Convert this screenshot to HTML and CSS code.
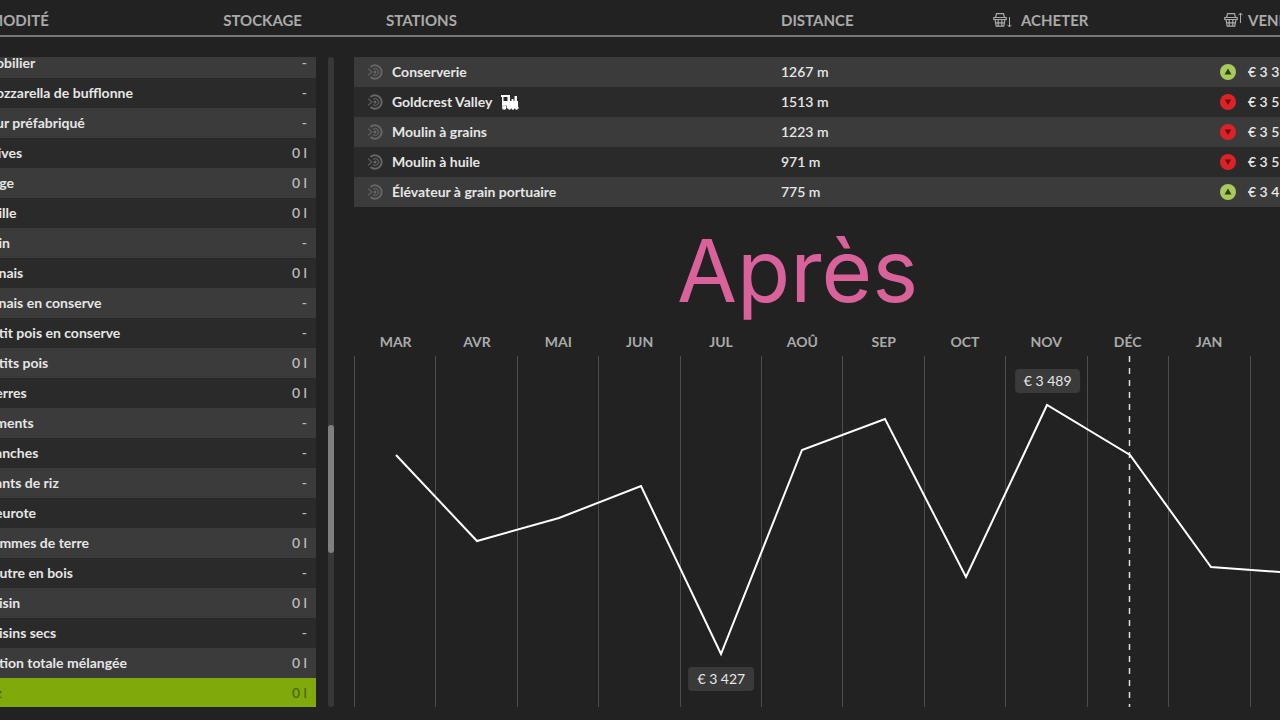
FILE: index.html
```html
<!DOCTYPE html>
<html lang="fr">
<head>
<meta charset="utf-8">
<title>Prix</title>
<link rel="stylesheet" href="styles.css">
</head>
<body>
<svg class="defs" aria-hidden="true">
  <symbol id="target" viewBox="0 0 16 16"><path d="M3.500 3a6.700 6.700 0 1 1 0 10" fill="none" stroke="currentColor" stroke-width="2"/><path d="M1 4.500 4.800 8 1 11.500M6 5.500a3.300 3.300 0 1 1 0 5" fill="none" stroke="currentColor" stroke-width="1.500" opacity=".75"/><circle cx="8" cy="8" r="1.500" fill="currentColor"/></symbol>
  <symbol id="basket" viewBox="0 0 14 16"><path d="M.8 5.500h12.400v2H.8zM2 7.500l1.200 6.700h7.600L12 7.500M2.500 5.500l1-3.800h7l1 3.800M5.200 7.500v6.700M8.800 7.500v6.700M2.500 10.800h9" fill="none" stroke="currentColor" stroke-width="1.200"/></symbol>
  <symbol id="up" viewBox="0 0 16 16"><circle cx="8" cy="8" r="8" fill="#a9c95c"/><path d="M8 4.500 11.500 10.500h-7z" fill="#24440a"/></symbol>
  <symbol id="down" viewBox="0 0 16 16"><circle cx="8" cy="8" r="8" fill="#dc2227"/><path d="M8 11 4.800 5.500h6.400z" fill="#6d0b0d"/></symbol>
</svg>
<div class="page">
  <section class="goods">
    <table>
      <thead><tr><th>COMMODITÉ</th><th class="amount">STOCKAGE</th></tr></thead>
      <tbody>
        <tr class="partial"><td>Mobilier</td><td>-</td></tr>
        <tr><td>Mozzarella de bufflonne</td><td>-</td></tr>
        <tr><td>Mur préfabriqué</td><td>-</td></tr>
        <tr><td>Olives</td><td>0 l</td></tr>
        <tr><td>Orge</td><td>0 l</td></tr>
        <tr><td>Paille</td><td>0 l</td></tr>
        <tr><td>Pain</td><td>-</td></tr>
        <tr><td>Panais</td><td>0 l</td></tr>
        <tr><td>Panais en conserve</td><td>-</td></tr>
        <tr><td>Petit pois en conserve</td><td>-</td></tr>
        <tr><td>Petits pois</td><td>0 l</td></tr>
        <tr><td>Pierres</td><td>0 l</td></tr>
        <tr><td>Piments</td><td>-</td></tr>
        <tr><td>Planches</td><td>-</td></tr>
        <tr><td>Plants de riz</td><td>-</td></tr>
        <tr><td>Pleurote</td><td>-</td></tr>
        <tr><td>Pommes de terre</td><td>0 l</td></tr>
        <tr><td>Poutre en bois</td><td>-</td></tr>
        <tr><td>Raisin</td><td>0 l</td></tr>
        <tr><td>Raisins secs</td><td>-</td></tr>
        <tr><td>Ration totale mélangée</td><td>0 l</td></tr>
        <tr class="selected"><td>Riz</td><td>0 l</td></tr>
      </tbody>
    </table>
  </section>
  <div class="track"><div class="thumb"></div></div>
  <main class="details">
    <table class="stations">
      <thead><tr>
        <th>STATIONS</th><th class="distance">DISTANCE</th>
        <th class="buy"><span class="label"><svg class="trade" viewBox="0 0 19 16"><use href="#basket" width="14" height="16"/><path d="M16.500 5v10M14.500 12.800l2 2.200 2-2.200" fill="none" stroke="currentColor"/></svg>ACHETER</span></th>
        <th class="sell"><span class="label"><svg class="trade" viewBox="0 0 19 16"><use href="#basket" width="14" height="16"/><path d="M16.500 11V1M14.500 3.200l2-2.200 2 2.200" fill="none" stroke="currentColor"/></svg>VENDRE</span></th>
      </tr></thead>
      <tbody>
        <tr><td><span class="label"><svg class="target"><use href="#target"/></svg>Conserverie</span></td><td>1267 m</td><td></td><td><span class="label"><svg class="trend"><use href="#up"/></svg>€ 3 3</span></td></tr>
        <tr><td><span class="label"><svg class="target"><use href="#target"/></svg>Goldcrest Valley<svg class="train" viewBox="0 0 18 15"><path fill="#fff" fill-rule="evenodd" d="M0 0h9v6h1.500V4h2v2h1V1h2.500v5H17v5l1 2.500H6.200L5.500 10.500h-4L1 12V2H0zM2.500 2v4h4V2z"/><g fill="#fff"><circle cx="3.200" cy="12.500" r="2.200"/><circle cx="8.500" cy="13.500" r="1.300"/><circle cx="12" cy="13.500" r="1.300"/><circle cx="15.500" cy="13.500" r="1.300"/></g></svg></span></td><td>1513 m</td><td></td><td><span class="label"><svg class="trend"><use href="#down"/></svg>€ 3 5</span></td></tr>
        <tr><td><span class="label"><svg class="target"><use href="#target"/></svg>Moulin à grains</span></td><td>1223 m</td><td></td><td><span class="label"><svg class="trend"><use href="#down"/></svg>€ 3 5</span></td></tr>
        <tr><td><span class="label"><svg class="target"><use href="#target"/></svg>Moulin à huile</span></td><td>971 m</td><td></td><td><span class="label"><svg class="trend"><use href="#down"/></svg>€ 3 5</span></td></tr>
        <tr><td><span class="label"><svg class="target"><use href="#target"/></svg>Élévateur à grain portuaire</span></td><td>775 m</td><td></td><td><span class="label"><svg class="trend"><use href="#up"/></svg>€ 3 4</span></td></tr>
      </tbody>
    </table>
    <h1>Après</h1>
    <div class="months"><span>MAR</span><span>AVR</span><span>MAI</span><span>JUN</span><span>JUL</span><span>AOÛ</span><span>SEP</span><span>OCT</span><span>NOV</span><span>DÉC</span><span>JAN</span></div>
    <div class="chart">
      <div class="columns"><i></i><i></i><i></i><i></i><i></i><i></i><i></i><i></i><i></i><i></i><i></i><i></i></div>
      <svg class="plot" viewBox="0 0 977 351" preserveAspectRatio="none" role="img" aria-label="Évolution du prix">
        <path d="M775.500 0V351" stroke="#ddd" stroke-width="1.500" stroke-dasharray="6 6"/>
        <polyline points="42,99 123,185 205,162 287,130 367,298 448,94 531,63 612,221 693,49 776,99 857,211 938,217" fill="none" stroke="#fff" stroke-width="2"/>
      </svg>
      <span class="price" style="left:71%;top:7%">€ 3 489</span>
      <span class="price" style="left:37.600%;top:92%">€ 3 427</span>
    </div>
  </main>
</div>
</body>
</html>
```
FILE: styles.css
```css
* { box-sizing: border-box; }
body { margin: 0; background: #222; }
.defs { position: absolute; width: 0; height: 0; }

.page {
  display: grid;
  grid-template-columns: 316px 38px minmax(0, 1fr);
  min-height: 100vh;
  overflow: hidden;
  padding-bottom: 13px;
  background: linear-gradient(#777, #777) 0 35px / 100% 2px no-repeat #222;
  color: #e6e6e6;
  font: 14px/20px Lato, "Open Sans", sans-serif;
}

table { border-collapse: collapse; table-layout: fixed; }
th {
  height: 57px;
  padding: 10px 0 0;
  vertical-align: top;
  text-align: left;
  font-size: 15px;
  font-weight: 700;
  color: #aaa;
  white-space: nowrap;
}
td { height: 30px; padding: 0; font-weight: 600; white-space: nowrap; }
td:first-child { font-weight: 700; }
tbody tr:nth-child(odd) { background: #3b3b3b; }
tbody tr:nth-child(even) { background: #2a2a2a; }

.goods table { width: calc(100% + 47px); margin-left: -47px; }
.goods td:first-child { padding-left: 30px; }
.goods .amount { width: 120px; padding-right: 14px; text-align: right; }
.goods td:last-child { padding-right: 9px; text-align: right; color: #bbb; }
.goods .partial td { height: 21px; padding-bottom: 9px; line-height: 12px; }
.goods .selected { background: #80aa0c; }
.goods .selected td { height: 29px; }
.goods .selected td, .goods .selected td:last-child { color: #4d6908; }

.track {
  width: 6px;
  margin: 57px 0 0 12px;
  padding-top: 368px;
  border-radius: 3px;
  background: #383838;
}
.thumb { height: 128px; border-radius: 3px; background: #808080; }

.details { display: flex; flex-direction: column; margin-right: -51px; }
.stations { width: 100%; }
.stations th:first-child { padding-left: 32px; }
.stations td:first-child { padding-left: 13px; }
.distance { width: 212px; }
.buy { width: 231px; }
.sell { width: 107px; }
.label { display: flex; align-items: center; }
.trade { width: 19px; height: 16px; margin-right: 9px; }
.sell .trade { margin-right: 5px; }
.target { width: 16px; height: 16px; margin-right: 9px; color: #666; }
.trend { width: 16px; height: 16px; margin: 0 12px 0 -4px; }
.train { width: 18px; height: 15px; margin-left: 9px; }

h1 {
  margin: 0;
  padding: 14px 90px 11px 0;
  text-align: center;
  font: 400 87px/100px Inter, Arial, sans-serif;
  color: #d9629b;
}
.months { display: grid; grid-template-columns: repeat(12, 1fr); padding-left: 1px; text-align: center; font-weight: 700; color: #aaa; }
.chart { position: relative; display: flex; flex: 1; min-height: 240px; margin-top: 4px; }
.columns { display: grid; grid-template-columns: repeat(12, 1fr); width: 100%; }
.columns i { border-left: 1px solid #4d4d4d; }
.plot { position: absolute; inset: 0; width: 100%; height: 100%; }
.price {
  position: absolute;
  transform: translate(-50%, -50%);
  padding: 2px 9px;
  border-radius: 4px;
  background: #3a3a3a;
  white-space: nowrap;
}
```
